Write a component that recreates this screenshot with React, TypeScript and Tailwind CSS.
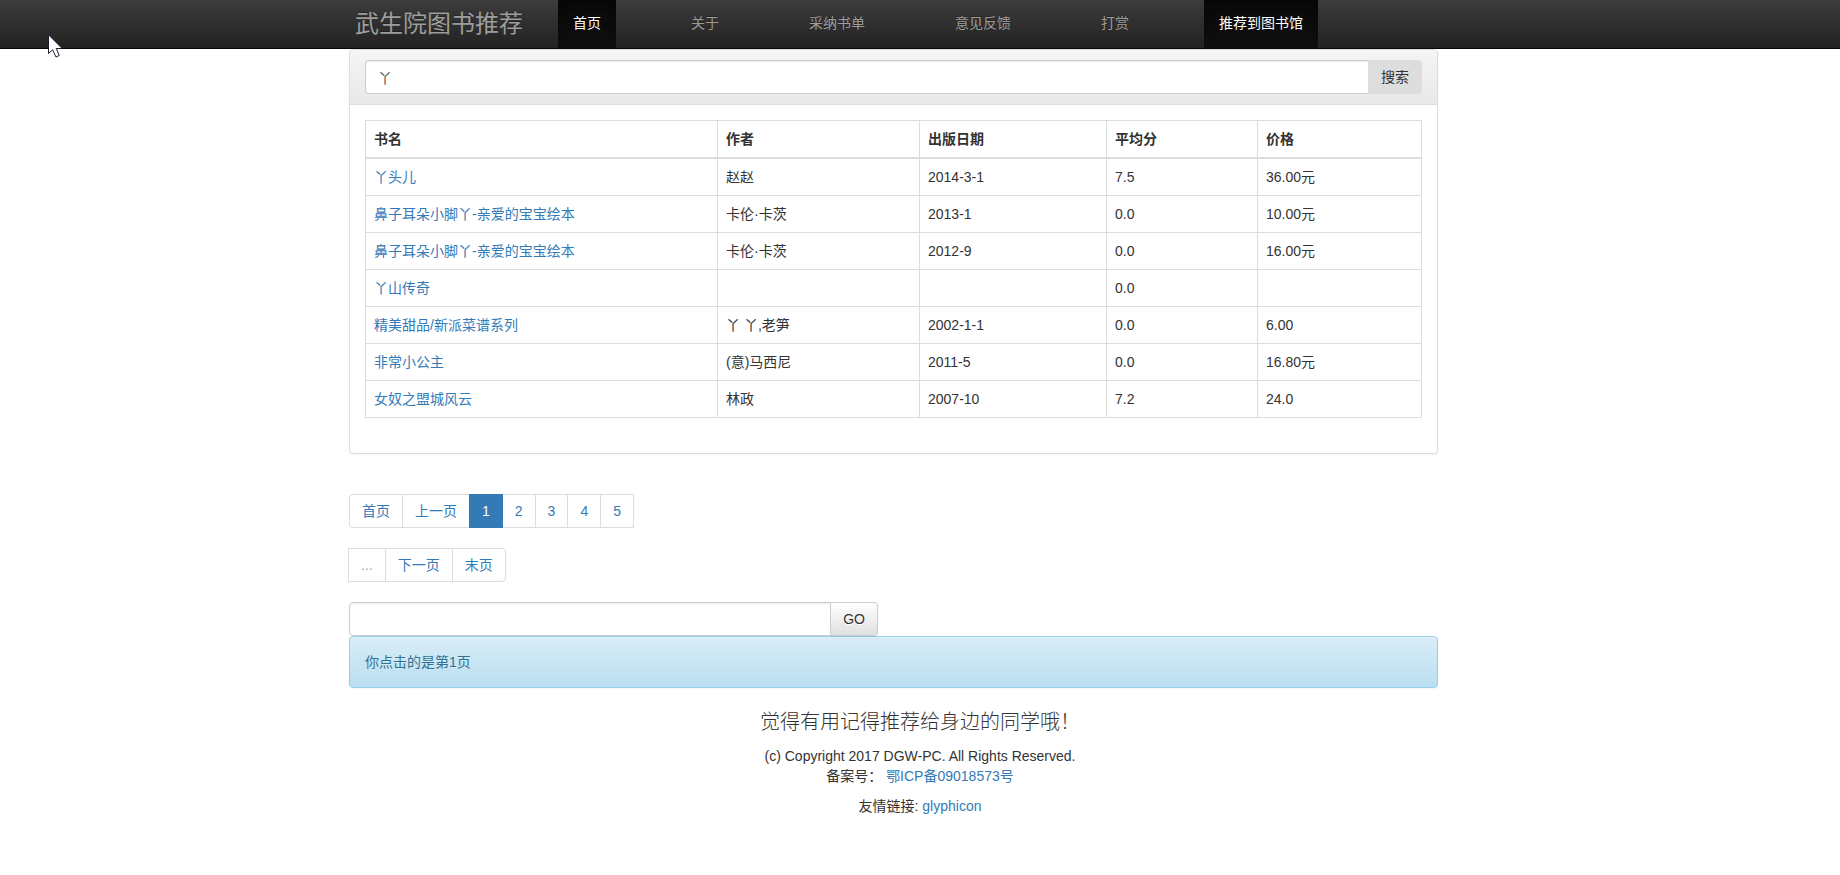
import { useState } from "react";
import type { ReactNode } from "react";

type Book = { title: string; author: string; date: string; score: string; price: string };

const books: Book[] = [
  { title: "丫头儿", author: "赵赵", date: "2014-3-1", score: "7.5", price: "36.00元" },
  { title: "鼻子耳朵小脚丫-亲爱的宝宝绘本", author: "卡伦·卡茨", date: "2013-1", score: "0.0", price: "10.00元" },
  { title: "鼻子耳朵小脚丫-亲爱的宝宝绘本", author: "卡伦·卡茨", date: "2012-9", score: "0.0", price: "16.00元" },
  { title: "丫山传奇", author: "", date: "", score: "0.0", price: "" },
  { title: "精美甜品/新派菜谱系列", author: "丫 丫,老笋", date: "2002-1-1", score: "0.0", price: "6.00" },
  { title: "非常小公主", author: "(意)马西尼", date: "2011-5", score: "0.0", price: "16.80元" },
  { title: "女奴之盟城风云", author: "林政", date: "2007-10", score: "7.2", price: "24.0" },
];

const navItems = [
  { label: "首页", active: true },
  { label: "关于", active: false },
  { label: "采纳书单", active: false },
  { label: "意见反馈", active: false },
  { label: "打赏", active: false },
  { label: "推荐到图书馆", active: true },
];

const columns = [
  { label: "书名", width: "w-[352px]" },
  { label: "作者", width: "w-[202px]" },
  { label: "出版日期", width: "w-[187px]" },
  { label: "平均分", width: "w-[151px]" },
  { label: "价格", width: "" },
];

function Navbar() {
  return (
    <nav className="border-b border-[#080808] bg-linear-to-b from-[#3c3c3c] to-[#222222]">
      <div className="mx-auto flex h-12 max-w-[1170px] items-stretch pl-5">
        <a href="#" className="mr-[35px] flex items-center text-2xl text-[#9d9d9d] [text-shadow:0_-1px_0_rgba(0,0,0,0.25)]">
          武生院图书推荐
        </a>
        <ul className="flex gap-[60px]">
          {navItems.map((item) => (
            <li key={item.label} className="flex">
              <a
                href="#"
                className={
                  item.active
                    ? "bg-linear-to-b from-[#080808] to-[#0f0f0f] px-[15px] pt-[13px] leading-5 text-white shadow-[inset_0_3px_9px_rgba(0,0,0,0.25)] [text-shadow:0_-1px_0_rgba(0,0,0,0.25)]"
                    : "px-[15px] pt-[13px] leading-5 text-[#9d9d9d] [text-shadow:0_-1px_0_rgba(0,0,0,0.25)]"
                }
              >
                {item.label}
              </a>
            </li>
          ))}
        </ul>
      </div>
    </nav>
  );
}

function SearchBar() {
  const [query, setQuery] = useState("丫");
  return (
    <form className="flex" onSubmit={(e) => e.preventDefault()}>
      <input
        type="text"
        aria-label="搜索图书"
        value={query}
        onChange={(e) => setQuery(e.target.value)}
        className="h-[34px] min-w-0 flex-1 rounded-l border border-r-0 border-[#cccccc] bg-white px-3 text-[#555555] shadow-[inset_0_1px_1px_rgba(0,0,0,0.075)] outline-none"
      />
      <button type="submit" className="h-[34px] rounded-r bg-[#dddddd] px-[13px] text-[#333333]">
        搜索
      </button>
    </form>
  );
}

function BookTable() {
  return (
    <table className="w-full table-fixed border-collapse border border-[#dddddd] text-left">
      <thead>
        <tr>
          {columns.map((c) => (
            <th key={c.label} scope="col" className={`${c.width} border border-b-2 border-[#dddddd] p-2 font-bold`}>
              {c.label}
            </th>
          ))}
        </tr>
      </thead>
      <tbody>
        {books.map((b, i) => (
          <tr key={i}>
            <td className="border border-[#dddddd] p-2">
              <a href="#" className="text-[#337ab7]">{b.title}</a>
            </td>
            <td className="border border-[#dddddd] p-2">{b.author}</td>
            <td className="border border-[#dddddd] p-2">{b.date}</td>
            <td className="border border-[#dddddd] p-2">{b.score}</td>
            <td className="border border-[#dddddd] p-2">{b.price}</td>
          </tr>
        ))}
      </tbody>
    </table>
  );
}

function PageLink({ children, active, edge }: { children: ReactNode; active?: boolean; edge?: "left" | "right" }) {
  const tone = active
    ? "z-10 border-[#337ab7] bg-[#337ab7] text-white"
    : "border-[#dddddd] bg-white text-[#337ab7]";
  const corner = edge === "left" ? "rounded-l" : edge === "right" ? "rounded-r -ml-px" : "-ml-px";
  return (
    <li className="flex">
      <a href="#" className={`relative border px-3 py-1.5 leading-5 ${tone} ${corner}`}>
        {children}
      </a>
    </li>
  );
}

function Pagination() {
  return (
    <div className="mt-10 flex flex-col gap-5">
      <ul className="flex">
        <PageLink edge="left">首页</PageLink>
        <PageLink>上一页</PageLink>
        <PageLink active>1</PageLink>
        <PageLink>2</PageLink>
        <PageLink>3</PageLink>
        <PageLink>4</PageLink>
        <PageLink>5</PageLink>
      </ul>
      <ul className="flex">
        <PageLink><span className="opacity-60">...</span></PageLink>
        <PageLink>下一页</PageLink>
        <PageLink edge="right">末页</PageLink>
      </ul>
      <form className="flex w-full max-w-[529px]" onSubmit={(e) => e.preventDefault()}>
        <input
          type="text"
          aria-label="页码"
          className="h-[34px] min-w-0 flex-1 rounded-l border border-[#cccccc] bg-white px-3 text-[#555555] shadow-[inset_0_1px_1px_rgba(0,0,0,0.075)] outline-none"
        />
        <button
          type="submit"
          className="-ml-px h-[34px] rounded-r border border-[#cccccc] bg-linear-to-b from-white to-[#e0e0e0] px-3 text-[#333333] shadow-[0_1px_1px_rgba(0,0,0,0.075)] [text-shadow:0_1px_0_#ffffff]"
        >
          GO
        </button>
      </form>
    </div>
  );
}

function Pointer() {
  return (
    <svg className="pointer-events-none absolute top-[34px] left-12 z-20" width="15" height="24" viewBox="0 0 15 24" aria-hidden="true">
      <path
        d="M0.5 0.8V19.5L4.6 15.8L8 23L11.2 21.5L8.4 14.5H14.2Z"
        fill="#ffffff"
        stroke="#1a1a2a"
        strokeWidth="1"
      />
    </svg>
  );
}

export default function App() {
  return (
    <div className="relative bg-white font-['Liberation_Sans','Noto_Sans_CJK_SC',sans-serif] text-sm leading-5 text-[#333333]">
      <Pointer />
      <Navbar />
      <main className="mx-auto max-w-[1170px] pr-[67px] pl-[14px]">
        <section className="rounded border border-[#dddddd] bg-white shadow-[0_1px_2px_rgba(0,0,0,0.05)]">
          <div className="rounded-t-[3px] border-b border-[#dddddd] bg-linear-to-b from-[#f5f5f5] to-[#e8e8e8] px-[15px] py-2.5">
            <SearchBar />
          </div>
          <div className="px-[15px] pt-[15px] pb-[35px]">
            <BookTable />
          </div>
        </section>
        <Pagination />
        <div
          role="status"
          className="rounded border border-[#9acfea] bg-linear-to-b from-[#d9edf7] to-[#b9def0] p-[15px] text-[#31708f] shadow-[inset_0_1px_0_rgba(255,255,255,0.25),0_1px_2px_rgba(0,0,0,0.05)] [text-shadow:0_1px_0_rgba(255,255,255,0.2)]"
        >
          你点击的是第1页
        </div>
      </main>
      <footer className="pt-5 text-center">
        <h2 className="mb-2.5 text-xl font-light">觉得有用记得推荐给身边的同学哦！</h2>
        <p>(c) Copyright 2017 DGW-PC. All Rights Reserved.</p>
        <p className="mb-2.5">
          备案号： <a href="#" className="text-[#337ab7]">鄂ICP备09018573号</a>
        </p>
        <p>
          友情链接: <a href="#" className="text-[#337ab7]">glyphicon</a>
        </p>
      </footer>
    </div>
  );
}
